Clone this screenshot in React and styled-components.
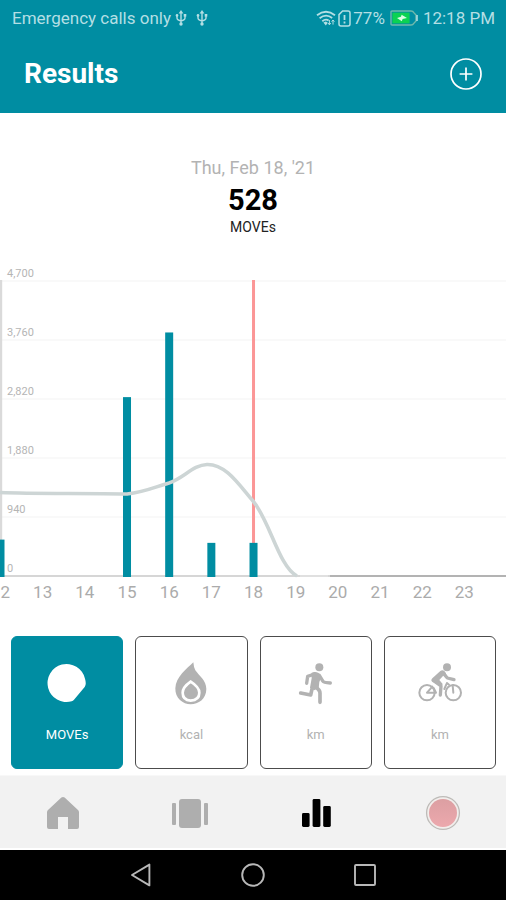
import React from "react";
import styled, { createGlobalStyle } from "styled-components";

const teal = "#008da2";
const muted = "#aeaeae";

const GlobalStyle = createGlobalStyle`
  * { box-sizing: border-box; }
  body { margin: 0; background: #fff; font-family: Roboto, "Liberation Sans", sans-serif; }
  button { font: inherit; border: 0; padding: 0; background: none; cursor: pointer; }
  svg { display: block; }
`;

const Screen = styled.div`
  min-height: 100vh;
  display: flex;
  flex-direction: column;
  background: #fff;
`;

const StatusBar = styled.div`
  display: flex;
  align-items: center;
  justify-content: space-between;
  height: 36px;
  padding: 0 11px 0 12px;
  background: ${teal};
  color: #b4dfe4;
  font-size: 17px;
  line-height: 20px;
  white-space: nowrap;
`;

const StatusGroup = styled.div`
  display: flex;
  align-items: center;
  gap: ${(p) => p.$gap}px;
`;

const Header = styled.header`
  display: flex;
  align-items: center;
  justify-content: space-between;
  height: 77px;
  padding: 0 24px 2px 24px;
  background: ${teal};
  color: #fff;
`;

const Title = styled.h1`
  margin: 0;
  font-size: 28px;
  line-height: 32px;
  font-weight: 700;
`;

const AddButton = styled.button`
  color: #fff;
`;

const Summary = styled.section`
  display: flex;
  flex-direction: column;
  align-items: center;
  padding-top: 43px;
  height: 147px;
`;

const SummaryDate = styled.div`
  font-size: 18px;
  line-height: 24px;
  color: #b3b3b3;
`;

const SummaryValue = styled.div`
  font-size: 29px;
  line-height: 40px;
  font-weight: 700;
  color: #000;
`;

const SummaryUnit = styled.div`
  font-size: 14px;
  line-height: 14px;
  color: #222;
`;

const ChartArea = styled.section`
  svg { width: 100%; height: auto; }
`;

const AxisText = styled.text`
  font-size: ${(p) => (p.$day ? 17 : 11)}px;
  fill: ${(p) => (p.$day ? "#ababab" : "#b5b5b5")};
`;

const MetricRow = styled.section`
  display: grid;
  grid-template-columns: repeat(4, 1fr);
  gap: 12px;
  padding: 26px 10px 6px 11px;
`;

const MetricCard = styled.button`
  && {
    display: flex;
    flex-direction: column;
    align-items: center;
    height: 133px;
    padding-top: 24px;
    border-radius: 6px;
    border: 1px solid ${(p) => (p.$active ? teal : "#4c4c4c")};
    background: ${(p) => (p.$active ? teal : "#fff")};
    color: ${(p) => (p.$active ? "#fff" : "#b2b2b2")};
    font-size: 13px;
    line-height: 16px;
  }
`;

const MetricLabel = styled.span`
  margin-top: 22px;
`;

const TabBar = styled.nav`
  display: grid;
  grid-template-columns: repeat(4, 1fr);
  height: 75px;
  margin-top: auto;
  padding-top: 2px;
  background: #f2f2f2;
  border-top: 1px solid #f8f8f8;
  border-bottom: 2px solid #fff;
`;

const TabButton = styled.button`
  display: flex;
  align-items: center;
  justify-content: center;
  color: ${(p) => (p.$active ? "#000" : muted)};
`;

const SystemBar = styled.nav`
  display: flex;
  justify-content: center;
  gap: 72px;
  height: 50px;
  background: #000;
  color: #b8b8b8;
`;

const SystemButton = styled.button`
  display: flex;
  align-items: center;
  justify-content: center;
  width: 40px;
  color: inherit;
`;

const UsbIcon = () => (
  <svg width="12" height="18" viewBox="0 0 12 18" fill="none" stroke="currentColor" strokeWidth="1.4">
    <path d="M6 3v12M2 6v3q0 2 4 3M10 6v3q0 2-4 3" />
    <path d="M3.6 4.4 6 1l2.4 3.4Z" fill="currentColor" stroke="none" />
    <circle cx="2" cy="6.4" r="1.3" fill="currentColor" stroke="none" />
    <path d="M8.7 5h2.6v2.6H8.7Z" fill="currentColor" stroke="none" />
    <circle cx="6" cy="15" r="1.7" fill="currentColor" stroke="none" />
  </svg>
);

const WifiIcon = () => (
  <svg width="20" height="18" viewBox="0 0 20 18" fill="none" stroke="currentColor" strokeWidth="1.8">
    <path d="M1 6.2Q10-.8 19 6.2M3.6 9.2Q10 4.2 16.2 9M6.3 12.2Q9.6 9.4 12.6 11.4" />
    <path d="m7.4 13.6 2.4-1.2 2 1.4-2 2.6Z" fill="currentColor" stroke="none" />
    <path d="M13.4 11v4.6M17 15.6V11M12 14l1.4 1.8 1.4-1.8M15.6 12.6 17 11l1.4 1.6" strokeWidth="1" />
  </svg>
);

const SimIcon = () => (
  <svg width="13" height="17" viewBox="0 0 13 17" fill="none" stroke="currentColor" strokeWidth="1.5">
    <path d="M4.6 1H10q2 0 2 2v11q0 2-2 2H3q-2 0-2-2V4.6Z" />
    <path d="M6.5 5v5M6.5 11.6v2" strokeWidth="1.8" />
  </svg>
);

const BatteryIcon = () => (
  <svg width="28" height="16" viewBox="0 0 28 16" fill="none">
    <path d="M2 1h19q2 0 2.6 1.4L26 5v6l-2.4 2.6Q23 15 21 15H2q-1 0-1-1V2q0-1 1-1Z" stroke="#70b9ac" strokeWidth="1.4" />
    <path d="M27 5v6" stroke="currentColor" strokeWidth="1.5" />
    <path d="M2.4 2.6h17.2v10.8H2.4Z" fill="#0bd252" />
    <path d="m7 8 4-1.2.6-2L17 8l-4.4 1-.8 2.2Z" fill="#d9ffe4" />
  </svg>
);

const AddIcon = () => (
  <svg width="32" height="32" viewBox="0 0 32 32" fill="none" stroke="currentColor" strokeWidth="1.7">
    <circle cx="16" cy="16" r="15" />
    <path d="M16 9.6v12.8M9.6 16h12.8" />
  </svg>
);

const MetricIcon = ({ children }) => (
  <svg width="44" height="44" viewBox="0 0 132 132" fill="currentColor">
    {children}
  </svg>
);

const MovesIcon = () => (
  <MetricIcon>
    <path d="M80 121A57 57 0 1 1 120 53Q125 70 119 78L87 116Q84 120 80 121Z" />
  </MetricIcon>
);

const FlameIcon = () => (
  <MetricIcon>
    <path d="M73 4C54 22 20 48 19 82C18 112 42 130 65 130S112 114 112 84C112 59 91 45 79 28Q74 18 73 4Z" />
    <path d="M65 62C55 69 41 81 41 95Q41 117 65 119Q91 117 91 95C91 81 76 69 65 62Z" stroke="#fff" strokeWidth="8" />
  </MetricIcon>
);

const RunnerIcon = () => (
  <MetricIcon>
    <circle cx="76" cy="19" r="12" />
    <path d="M52 36Q62 30 74 36L82 48 76 63 74 82 60 88 48 80 53 52Z" />
    <g fill="none" stroke="currentColor" strokeWidth="10" strokeLinecap="round" strokeLinejoin="round">
      <path d="M62 39 41 46 38 67M76 43 87 61Q89 65 109 66" />
      <path d="M62 76Q78 86 78 96V124M55 80 50 102 20 96" strokeWidth="11" />
    </g>
  </MetricIcon>
);

const CyclistIcon = () => (
  <MetricIcon>
    <circle cx="87" cy="19" r="12" />
    <path d="M67 30Q76 24 83 35L86 45 77 43 64 57 74 69 72 74 43 63Q37 58 43 52Z" />
    <g fill="none" stroke="currentColor" strokeLinecap="round" strokeLinejoin="round">
      <g strokeWidth="6">
        <circle cx="27" cy="95" r="23" />
        <circle cx="106" cy="95" r="23" />
        <path d="M27 95 43 77M27 95H54L47 81M86 68 79 84M87 66 93 71M106 95 104 73" />
      </g>
      <path d="M77 38 88 51 108 56M50 61 69 75 67 102" strokeWidth="10" />
    </g>
  </MetricIcon>
);

const HomeIcon = () => (
  <svg width="32" height="34" viewBox="0 0 32 34" fill="currentColor">
    <path d="M14.4 1.6Q16 .2 17.6 1.6L31 14q1 1 1 2.4V31q0 2-2 2h-9V21H11v12H2q-2 0-2-2V16.4Q0 15 1 14Z" />
  </svg>
);

const CarouselIcon = () => (
  <svg width="36" height="30" viewBox="0 0 36 30" fill="currentColor">
    <rect x="7" y="1" width="22" height="29" rx="3" />
    <rect x="0" y="5" width="4" height="22" rx="1" />
    <rect x="32" y="5" width="4" height="22" rx="1" />
  </svg>
);

const BarsIcon = () => (
  <svg width="29" height="30" viewBox="0 0 29 30" fill="currentColor">
    <rect x="0" y="15" width="7.6" height="14" rx="1.4" />
    <rect x="10.6" y="1" width="7.8" height="28" rx="1.4" />
    <rect x="21.2" y="8" width="7.6" height="21" rx="1.4" />
  </svg>
);

const RecordIcon = () => (
  <svg width="36" height="36" viewBox="0 0 36 36">
    <defs>
      <linearGradient id="record-fill" x1="0" y1="0" x2="0" y2="1">
        <stop offset="0" stopColor="#dc9fa2" />
        <stop offset="1" stopColor="#eca8ad" />
      </linearGradient>
    </defs>
    <circle cx="18" cy="18" r="16.4" fill="#f2eeec" stroke="#bdbbb8" strokeWidth="1.3" />
    <circle cx="18" cy="18" r="14" fill="url(#record-fill)" />
  </svg>
);

const systemIcons = {
  Back: <path d="M3 12 20.4 1.6V22.4Z" />,
  Home: <circle cx="12" cy="12" r="10.8" />,
  Recents: <rect x="2" y="2" width="20" height="20" rx="1" />,
};

const metrics = [
  { label: "MOVEs", name: "Moves", Icon: MovesIcon, active: true },
  { label: "kcal", name: "Calories", Icon: FlameIcon },
  { label: "km", name: "Running distance", Icon: RunnerIcon },
  { label: "km", name: "Cycling distance", Icon: CyclistIcon },
];

const tabs = [
  { name: "Home", Icon: HomeIcon },
  { name: "Cards", Icon: CarouselIcon },
  { name: "Results", Icon: BarsIcon, active: true },
  { name: "Record", Icon: RecordIcon },
];

const values = [
  { day: 12, moves: 580 },
  { day: 15, moves: 2850 },
  { day: 16, moves: 3880 },
  { day: 17, moves: 528 },
  { day: 18, moves: 528 },
];
const days = [12, 13, 14, 15, 16, 17, 18, 19, 20, 21, 22, 23];
const ticks = [4700, 3760, 2820, 1880, 940, 0];
const baseline = 316;
const xOf = (day) => 0.5 + (day - 12) * 42.17;
const yOf = (value) => baseline - (value / 4700) * 295;

function MovesChart() {
  return (
    <ChartArea>
      <svg viewBox="0 0 506 350" role="img" aria-label="Moves per day">
        {ticks.map((t) => (
          <g key={t}>
            <path d={`M0 ${yOf(t)}H506`} stroke={t ? "#f7f7f7" : "#c9c9c9"} strokeWidth="1.5" />
            <AxisText x="7" y={yOf(t) - 4}>{t.toLocaleString("en-US")}</AxisText>
          </g>
        ))}
        <path d="M1 20V316" stroke="#dadada" strokeWidth="2.4" />
        <path d={`M${xOf(18)} 20V316`} stroke="#fb9696" strokeWidth="3" />
        {values.map(({ day, moves }) => (
          <rect key={day} x={xOf(day) - 4} y={yOf(moves)} width="8" height={baseline + 1 - yOf(moves)} fill={teal} />
        ))}
        <path
          d="M0 232.5C35 234 85 233 127 234C145 232 155 227 169 223C184 218 193 205 207 204.500C226 204 239 225 253 241C270 261 279 307 297 316"
          fill="none"
          stroke="#cdd5d5"
          strokeWidth="3.6"
        />
        <path d="M300 316H328" stroke="#e2e2e2" strokeWidth="1.6" />
        <path d="M330 316H506" stroke="#b3b3b3" strokeWidth="1.8" />
        {days.map((d) => (
          <AxisText $day key={d} x={xOf(d)} y="338" textAnchor="middle">{d}</AxisText>
        ))}
      </svg>
    </ChartArea>
  );
}

export default function App() {
  return (
    <Screen>
      <GlobalStyle />
      <StatusBar>
        <StatusGroup $gap={4}>
          <span>Emergency calls only</span>
          <StatusGroup $gap={9}>
            <UsbIcon />
            <UsbIcon />
          </StatusGroup>
        </StatusGroup>
        <StatusGroup $gap={5}>
          <StatusGroup $gap={2}>
            <WifiIcon />
            <SimIcon />
            <span>77%</span>
          </StatusGroup>
          <BatteryIcon />
          <span>12:18 PM</span>
        </StatusGroup>
      </StatusBar>
      <Header>
        <Title>Results</Title>
        <AddButton aria-label="Add result"><AddIcon /></AddButton>
      </Header>
      <Summary>
        <SummaryDate>Thu, Feb 18, '21</SummaryDate>
        <SummaryValue>528</SummaryValue>
        <SummaryUnit>MOVEs</SummaryUnit>
      </Summary>
      <MovesChart />
      <MetricRow>
        {metrics.map(({ label, name, Icon, active }) => (
          <MetricCard key={name} $active={active} aria-pressed={!!active} title={name}>
            <Icon />
            <MetricLabel>{label}</MetricLabel>
          </MetricCard>
        ))}
      </MetricRow>
      <TabBar aria-label="Main">
        {tabs.map(({ name, Icon, active }) => (
          <TabButton key={name} $active={active} aria-label={name}><Icon /></TabButton>
        ))}
      </TabBar>
      <SystemBar aria-label="System">
        {Object.entries(systemIcons).map(([name, shape]) => (
          <SystemButton key={name} aria-label={name}>
            <svg width="24" height="24" viewBox="0 0 24 24" fill="none" stroke="currentColor" strokeWidth="1.9" strokeLinejoin="round">
              {shape}
            </svg>
          </SystemButton>
        ))}
      </SystemBar>
    </Screen>
  );
}
